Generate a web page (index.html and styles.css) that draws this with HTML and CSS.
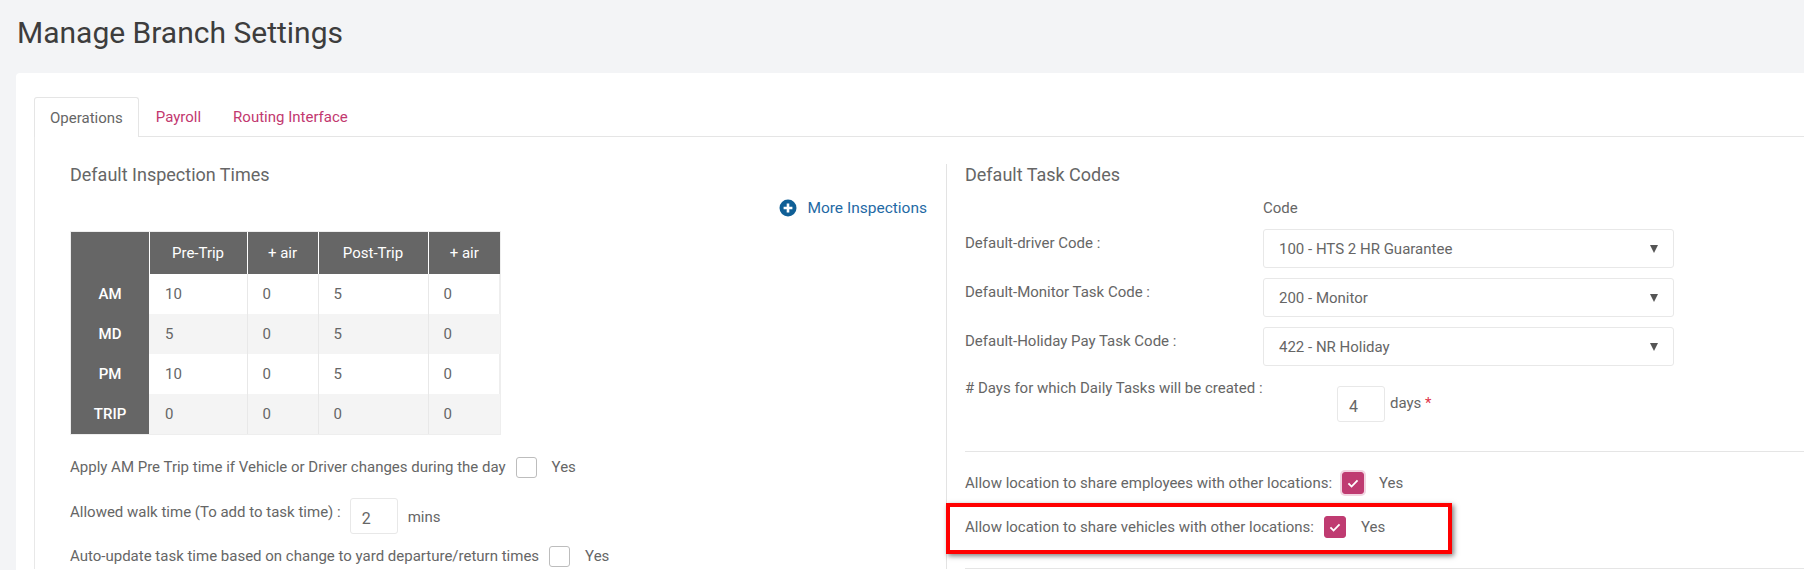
FILE: index.html
```html
<!DOCTYPE html>
<html lang="en">
<head>
<meta charset="utf-8">
<title>Manage Branch Settings</title>
<link rel="stylesheet" href="styles.css">
</head>
<body>
<h1 class="page-title">Manage Branch Settings</h1>
<main class="panel">
  <nav class="tabs">
    <a class="tab tab-active">Operations</a>
    <a class="tab">Payroll</a>
    <a class="tab">Routing Interface</a>
  </nav>
  <div class="tab-body">
    <section class="col-left">
      <h2 class="section-title">Default Inspection Times</h2>
      <div class="more-row">
        <a class="more-link">
          <svg class="more-icon" viewBox="0 0 18 18" aria-hidden="true"><circle cx="9" cy="9" r="8.5" fill="#0f5f96"/><path d="M9 4.6v8.8M4.6 9h8.8" stroke="#fff" stroke-width="2.6" fill="none"/></svg>
          More Inspections
        </a>
      </div>
      <div class="table-wrap">
        <table class="times">
          <colgroup><col class="c0"><col class="c1"><col class="c2"><col class="c3"><col class="c4"></colgroup>
          <thead>
            <tr><th></th><th>Pre-Trip</th><th>+ air</th><th>Post-Trip</th><th>+ air</th></tr>
          </thead>
          <tbody>
            <tr><th>AM</th><td>10</td><td>0</td><td>5</td><td>0</td></tr>
            <tr><th>MD</th><td>5</td><td>0</td><td>5</td><td>0</td></tr>
            <tr><th>PM</th><td>10</td><td>0</td><td>5</td><td>0</td></tr>
            <tr><th>TRIP</th><td>0</td><td>0</td><td>0</td><td>0</td></tr>
          </tbody>
        </table>
      </div>
      <div class="line line-apply">
        <span>Apply AM Pre Trip time if Vehicle or Driver changes during the day</span>
        <span class="check"></span><span class="yes">Yes</span>
      </div>
      <div class="line line-walk">
        <span class="walk-label">Allowed walk time (To add to task time) :</span>
        <span class="num num-walk">2</span>
        <span class="unit">mins</span>
      </div>
      <div class="line line-auto">
        <span>Auto-update task time based on change to yard departure/return times</span>
        <span class="check"></span><span class="yes">Yes</span>
      </div>
    </section>
    <section class="col-right">
      <h2 class="section-title">Default Task Codes</h2>
      <div class="code-head">Code</div>
      <div class="code-row">
        <label class="code-label">Default-driver Code :</label>
        <div class="select"><span>100 - HTS 2 HR Guarantee</span><i class="caret"></i></div>
      </div>
      <div class="code-row">
        <label class="code-label">Default-Monitor Task Code :</label>
        <div class="select"><span>200 - Monitor</span><i class="caret"></i></div>
      </div>
      <div class="code-row">
        <label class="code-label">Default-Holiday Pay Task Code :</label>
        <div class="select"><span>422 - NR Holiday</span><i class="caret"></i></div>
      </div>
      <div class="days-row">
        <div class="days-label"># Days for which Daily Tasks will be created :</div>
        <span class="num num-days">4</span>
        <span class="days-unit">days <em class="req">*</em></span>
      </div>
      <hr class="rule rule-a">
      <div class="share share-a">
        <span>Allow location to share employees with other locations:</span>
        <span class="check check-on check-focus"><svg viewBox="0 0 22 22" aria-hidden="true"><path d="M6 11.5l3.4 3.4L16 8" stroke="#fff" stroke-width="2" fill="none"/></svg></span>
        <span class="yes">Yes</span>
      </div>
      <div class="share share-b">
        <span>Allow location to share vehicles with other locations:</span>
        <span class="check check-on"><svg viewBox="0 0 22 22" aria-hidden="true"><path d="M6 11.5l3.4 3.4L16 8" stroke="#fff" stroke-width="2" fill="none"/></svg></span>
        <span class="yes">Yes</span>
        <div class="callout"></div>
      </div>
      <hr class="rule rule-b">
    </section>
  </div>
</main>
</body>
</html>
```

FILE: styles.css
```css
* { box-sizing: border-box; }
html, body { margin: 0; height: 570px; overflow: hidden; }
body {
  background: #f3f4f6;
  font-family: Roboto, "Liberation Sans", sans-serif;
  font-size: 15px;
  line-height: 24px;
  color: #666;
}
.page-title {
  margin: 0;
  height: 73px;
  padding: 14px 0 0 17px;
  font-size: 30px;
  line-height: 38px;
  font-weight: 400;
  color: #3d3d3d;
}
.panel {
  margin-left: 16px;
  height: 497px;
  padding: 24px 0 0 18px;
  background: #fff;
  border-radius: 4px 0 0 0;
}
.tabs {
  display: flex;
  height: 40px;
  border-bottom: 1px solid #e5e5e5;
}
.tab {
  height: 39px;
  padding: 8px 15px 0;
  margin-right: 2px;
  font-size: 15px;
  line-height: 24px;
  color: #c2386f;
}
.tab-active {
  height: 40px;
  background: #fff;
  border: 1px solid #e5e5e5;
  border-bottom: 0;
  border-radius: 3px 3px 0 0;
  color: #666;
}
.tab-body {
  display: flex;
  padding-top: 27px;
  border-left: 1px solid #e8e8e8;
}
.col-left {
  flex: none;
  width: 911px;
  padding: 0 19px 0 35px;
}
.col-right {
  flex: 1;
  padding-left: 18px;
  border-left: 1px solid #e3e3e3;
}
.section-title {
  margin: 0;
  font-size: 18px;
  line-height: 22px;
  font-weight: 400;
  color: #666;
}
.more-row {
  display: flex;
  justify-content: flex-end;
  margin-top: 11px;
  height: 22px;
}
.more-link {
  display: flex;
  align-items: center;
  gap: 10px;
  font-size: 15.5px;
  line-height: 22px;
  color: #1f6aa5;
}
.more-icon { width: 18px; height: 18px; }
.table-wrap {
  width: 431px;
  height: 204px;
  margin-top: 12px;
  border: 1px solid #eee;
  border-width: 1px 2px 2px 1px;
}
.times {
  table-layout: fixed;
  width: 429px;
  border-collapse: collapse;
}
.c0 { width: 78px; }
.c1 { width: 98px; }
.c2 { width: 71px; }
.c3 { width: 110px; }
.c4 { width: 72px; }
.times th {
  background: #666;
  color: #fff;
  font-size: 15px;
  font-weight: 500;
  text-align: center;
  padding: 0;
}
.times thead th {
  height: 42px;
  font-weight: 400;
  border-left: 1px solid #fff;
}
.times thead th:first-child { border-left: 0; }
.times tbody th { height: 40px; }
.times td {
  height: 40px;
  padding: 0 0 0 15px;
  border-left: 1px solid #e8e8e8;
}
.times tbody tr:nth-child(even) td { background: #f4f4f4; }
.times tbody th + td { border-left: 0; padding-left: 16px; }
.line {
  display: flex;
  align-items: center;
}
.line-apply { margin-top: 20px; height: 24px; }
.line-walk { margin-top: 19px; height: 36px; align-items: flex-start; }
.line-auto { margin-top: 10px; height: 24px; }
.check {
  flex: none;
  width: 21px;
  height: 21px;
  margin-left: 10px;
  background: #fff;
  border: 1px solid #bdbdbd;
  border-radius: 3px;
}
.yes { margin-left: 15px; }
.walk-label { line-height: 24px; margin-top: 2px; }
.num {
  flex: none;
  display: block;
  width: 48px;
  height: 36px;
  padding: 6px 0 0 11px;
  border: 1px solid #e8e8e8;
  border-radius: 3px;
  font-size: 16px;
  line-height: 28px;
}
.num-walk { margin-left: 9px; }
.unit { margin: 7px 0 0 10px; }
.code-head { margin: 11px 0 0 298px; height: 22px; line-height: 22px; }
.code-row {
  display: flex;
  margin-top: 10px;
  height: 39px;
}
.code-head + .code-row { margin-top: 10px; }
.code-label { flex: none; width: 298px; padding-top: 2px; }
.select {
  flex: none;
  display: flex;
  align-items: center;
  justify-content: space-between;
  width: 411px;
  height: 39px;
  padding: 0 15px;
  border: 1px solid #e8e8e8;
  border-radius: 3px;
  font-size: 15px;
}
.caret {
  width: 0;
  height: 0;
  border-left: 4.5px solid transparent;
  border-right: 4.5px solid transparent;
  border-top: 8px solid #555;
}
.days-row {
  display: flex;
  align-items: flex-start;
  margin-top: 10px;
  height: 48px;
}
.days-label { flex: none; width: 332px; }
.num-days { margin: 10px 0 0 40px; }
.days-unit { margin: 15px 0 0 5px; }
.req { font-style: normal; color: #e0344a; }
.rule {
  height: 1px;
  margin: 0;
  border: 0;
  background: #e5e5e5;
}
.rule-a { margin-top: 27px; }
.rule-b { margin-top: 29px; }
.share {
  position: relative;
  display: flex;
  align-items: center;
  height: 24px;
}
.share-a { margin-top: 19px; }
.share-b { margin-top: 20px; }
.check-on {
  background: #bf3b71;
  border-color: #bf3b71;
  width: 22px;
  height: 22px;
}
.check-on svg { display: block; width: 20px; height: 20px; }
.check-focus { box-shadow: 0 0 0 2px #f2d5e1; }
.callout {
  position: absolute;
  left: -19px;
  top: -12px;
  width: 506px;
  height: 51px;
  border: 4px solid #f00;
  box-shadow: 2px 2px 5px rgba(0, 0, 0, 0.5);
  pointer-events: none;
}
```
